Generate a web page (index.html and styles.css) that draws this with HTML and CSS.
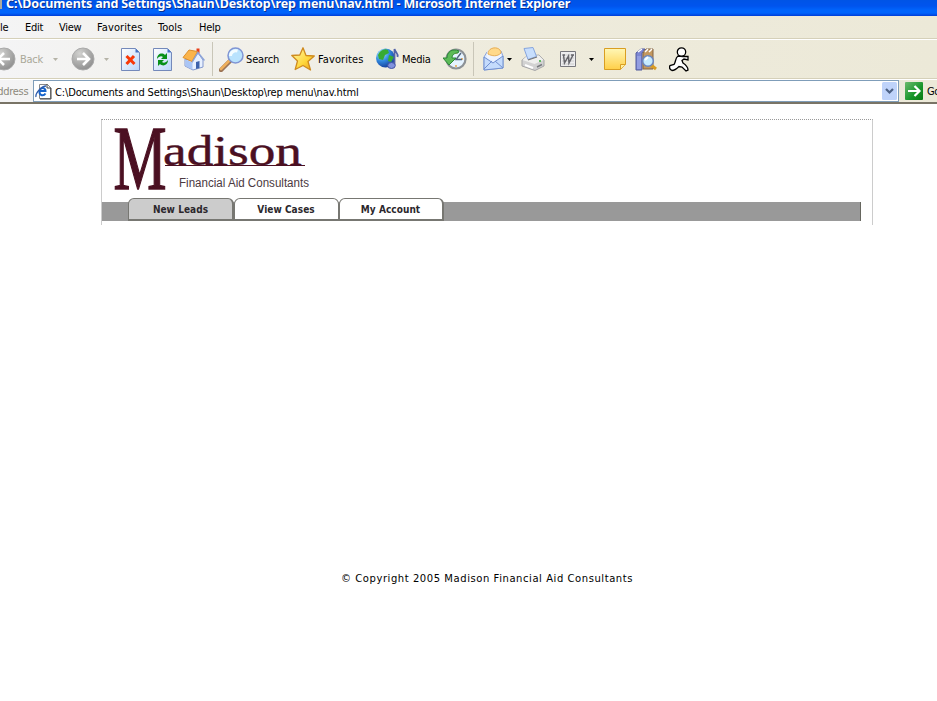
FILE: index.html
```html
<!DOCTYPE html>
<html lang="en">
<head>
<meta charset="utf-8">
<title>Madison Financial Aid Consultants</title>
<link rel="stylesheet" href="styles.css">
</head>
<body>
<header class="browser">
  <div class="titlebar"><i class="title-icon"></i><span class="title">C:\Documents and Settings\Shaun\Desktop\rep menu\nav.html - Microsoft Internet Explorer</span></div>
  <nav class="menubar">
    <span class="m-file">File</span><span class="m-edit">Edit</span><span class="m-view">View</span><span class="m-fav">Favorites</span><span class="m-tools">Tools</span><span class="m-help">Help</span>
  </nav>
  <div class="toolbar">
    <svg class="back" width="24" height="24" viewBox="0 0 24 24"><defs><radialGradient id="gray" cx=".35" cy=".25" r=".85"><stop offset="0" stop-color="#d2d2d0"/><stop offset="1" stop-color="#898989"/></radialGradient></defs><circle cx="12" cy="12" r="11" fill="url(#gray)" stroke="#aaa"/><path d="M18 12H7M12 6l-6 6 6 6" fill="none" stroke="#fff" stroke-width="2.6"/></svg>
    <span class="label t-back">Back</span>
    <svg class="caret c1" width="5" height="3" viewBox="0 0 5 3"><path d="M0 0h5L2.500 3z" fill="#b5b3a7"/></svg>
    <svg class="fwd" width="24" height="24" viewBox="0 0 24 24"><circle cx="12" cy="12" r="11" fill="url(#gray)" stroke="#aaa"/><path d="M6 12h11M12 6l6 6-6 6" fill="none" stroke="#fff" stroke-width="2.600"/></svg>
    <svg class="caret c2" width="5" height="3" viewBox="0 0 5 3"><path d="M0 0h5L2.500 3z" fill="#b5b3a7"/></svg>
    <svg class="stop" width="19" height="23" viewBox="0 0 19 23"><defs><linearGradient id="sheet" x2="1" y2="1"><stop stop-color="#fff"/><stop offset="1" stop-color="#b9d5fa"/></linearGradient></defs><path d="M.5.5h14l4 4v18H.5z" fill="url(#sheet)" stroke="#7489ba"/><path d="M14.500.5v4h4z" fill="#4672c4"/><path d="M5.500 8l8 8M13 8l-7.500 8" stroke="#f83808" stroke-width="3"/></svg>
    <svg class="refresh" width="19" height="23" viewBox="0 0 19 23"><path d="M.5.5h14l4 4v18H.5z" fill="url(#sheet)" stroke="#7489ba"/><path d="M14.500.5v4h4z" fill="#4672c4"/><path d="M4 11c0-5 5-7 8-4l2-2v6H8l2-2c-2-1.500-4-.5-6 2zM15 12c0 5-5 7-8 4l-2 2v-6h6l-2 2c2 1.500 4 .5 6-2z" fill="#079018"/></svg>
    <svg class="home" width="23" height="24" viewBox="0 0 23 24"><path d="M3 12l7 2 6-8 5 7v7l-10 3-8-4z" fill="#e7f0ff" stroke="#8298cf"/><path d="M3.500 12.500l7 3v7l-7-3.500z" fill="#a9c5f5"/><path d="M14 15l3.500-1v7l-3.500 1z" fill="#3d62ac"/><path d="M14.500 1.500h3v5h-3z" fill="#e83e18"/><path d="M7 3l8.500 1.500L10 14.500l-9-4z" fill="#fbb44b" stroke="#dc902f"/><path d="M10 15.500L16 5.500l6.500 8" fill="none" stroke="#8da4d8" stroke-width="1.400"/></svg>
    <i class="sep s1"></i>
    <svg class="search" width="25" height="25" viewBox="0 0 25 25"><path d="M2 23l9-9" stroke="#9b7457" stroke-width="4.500" stroke-linecap="round"/><path d="M2 22l8-8" stroke="#efb05b" stroke-width="2.500" stroke-linecap="round"/><circle cx="16.500" cy="8.500" r="7.500" fill="#b9e3fd" stroke="#8095d4" stroke-width="1.500"/><path d="M11.500 9c0-4 4-6 7-5" fill="none" stroke="#f3fcff" stroke-width="3"/></svg>
    <span class="label t-search">Search</span>
    <svg class="star" width="24" height="24" viewBox="0 0 24 24"><defs><linearGradient id="gold" x2="1" y2="1"><stop stop-color="#fffab0"/><stop offset=".6" stop-color="#ffd73b"/><stop offset="1" stop-color="#e89b18"/></linearGradient></defs><path d="M12 .8l3 7.700 8.300.5-6.300 5.500 2.500 8.500-7.500-4.500-7.800 4L6.500 14 .8 8.500l8-.5z" fill="url(#gold)" stroke="#cf8b20" stroke-width="1.300" stroke-linejoin="round"/></svg>
    <span class="label t-fav">Favorites</span>
    <svg class="media" width="24" height="22" viewBox="0 0 24 22"><defs><radialGradient id="globe" cx=".3" cy=".25" r=".8"><stop stop-color="#b4edff"/><stop offset=".5" stop-color="#328be0"/><stop offset="1" stop-color="#153d9a"/></radialGradient></defs><circle cx="9.500" cy="10" r="9.500" fill="url(#globe)"/><path d="M2 7C4 2 9 0 12 2l1 3-4 2-2 5-4-1zM13 7l5 2-3 5-3-1z" fill="#37ab32"/><path d="M18.500 17V1c1 4 4 4 3 8" fill="none" stroke="#5262a8" stroke-width="1.800"/><ellipse cx="15.500" cy="17.500" rx="3.800" ry="3" fill="#8092df" stroke="#4054a5"/></svg>
    <span class="label t-media">Media</span>
    <svg class="history" width="24" height="22" viewBox="0 0 24 22"><circle cx="13" cy="11" r="9.500" fill="#e5f3ff" stroke="#8d9296" stroke-width="2.200"/><path d="M13 4v2M20 11h-2M13 19v-2" stroke="#e7a348" stroke-width="1.500"/><path d="M18 5l-5 6.500h6" fill="none" stroke="#51657c" stroke-width="1.400"/><path d="M16 3C9 0 4 4 4 10H0l6 7 7-7H9c0-3 2-5 6-5z" fill="#5cbb58" stroke="#2b8837"/></svg>
    <i class="sep s2"></i>
    <svg class="mail" width="21" height="24" viewBox="0 0 21 24"><path d="M1 10L4 5l14-1 2 5v12L1 23z" fill="#e1ecff" stroke="#8ba4d9"/><path d="M4 5c3-5 11-5 14-1v6l-7 4-7-3z" fill="#eef4ff"/><path d="M5 7c0-8 13-8 13-1-4 4-9 3-13 1z" fill="#ffd98a" stroke="#e6ad55"/><path d="M1 10l9 6 10-7v12L1 23z" fill="#c4dbfc" stroke="#7190d0"/><path d="M1 22l8-8M20 21l-8-7" stroke="#7190d0"/></svg>
    <svg class="caret c3" width="5" height="3" viewBox="0 0 5 3"><path d="M0 0h5L2.500 3z"/></svg>
    <svg class="printer" width="24" height="24" viewBox="0 0 24 24"><path d="M1 13l5-4 12-1 5 5v6l-9 4.500L1 19z" fill="#d2d2d2" stroke="#a5a5a7"/><path d="M1.500 13L6 9l12-.5 4.500 4.500-9 4z" fill="#f0f0ee"/><path d="M3 1.500l9-1 3.500 9-8.500 3z" fill="#c7defd" stroke="#86a4dd"/><path d="M7 13l9-3" stroke="#777" stroke-width="1.200"/><path d="M4 18l8 3" stroke="#fff" stroke-width="2"/><path d="M16 20l5-2.500" stroke="#77797d" stroke-width="1.500"/><path d="M18 14h2" stroke="#37ae39" stroke-width="1.500"/></svg>
    <svg class="word" width="16" height="16" viewBox="0 0 16 16"><path d="M.5.5h15v15H.5z" fill="#ededef" stroke="#77777d"/><path d="M2 4h12M2 7h12M2 10h12M2 13h12" stroke="#ccc"/><path d="M2.500 4h2.500M3.500 4l1 8 4-7 .5 7 4-8M11 4h3" fill="none" stroke="#66666c" stroke-width="1.500"/></svg>
    <svg class="caret c4" width="5" height="3" viewBox="0 0 5 3"><path d="M0 0h5L2.500 3z"/></svg>
    <svg class="note" width="22" height="22" viewBox="0 0 22 22"><defs><linearGradient id="noteFill" x2="0" y2="1"><stop stop-color="#fff7b6"/><stop offset="1" stop-color="#ffcf48"/></linearGradient></defs><path d="M.5.5h21v16l-5 5H.5z" fill="url(#noteFill)" stroke="#d99e22"/><path d="M16.500 21v-4.500h5" fill="#fff0a0" stroke="#d99e22"/></svg>
    <svg class="books" width="22" height="23" viewBox="0 0 22 23"><path d="M1 5l5-4h4L7 5v17H1z" fill="#7d87d3" stroke="#535d9e"/><path d="M3 8v13M5 8v13" stroke="#a9b4ef"/><path d="M8 5l3-4h7v20H8z" fill="#c3985f" stroke="#826343"/><path d="M3 4l4-3M10 4l3-3M14 4l3-3" stroke="#fff" stroke-width="1.500"/><path d="M16 17l5 4" stroke="#d99c22" stroke-width="3"/><circle cx="13" cy="13" r="5.300" fill="#c5eaff" stroke="#6985bf" stroke-width="1.500"/><path d="M10 12l3-3" stroke="#fff" stroke-width="2"/></svg>
    <svg class="aim" width="20" height="25" viewBox="0 0 20 25"><path d="M9 9C6 11 7 15 5 17.500l-4 1c-1 2 0 4 2 5 3 0 5-2 7-4l3 .5 4 4 2-1c0-3-2-5-5-7l-1-2.500 2-1.500 4 1V9.500h-5z" fill="#fff" stroke="#000" stroke-width="1.300"/><circle cx="12.500" cy="5" r="4.200" fill="#fff" stroke="#000" stroke-width="1.300"/></svg>
  </div>
  <div class="addressbar">
    <span class="address-label">Address</span>
    <div class="address">
      <svg class="page-icon" width="17" height="17" viewBox="0 0 17 17"><path d="M4.500 1.500h8l3 3v11h-11z" fill="#fff" stroke="#888"/><path d="M12 1v4h4v11H5" fill="none" stroke="#444"/><path d="M10.500 10.500c-2 3-6 2-6-1.500 0-5 6-5 6-1H5" fill="none" stroke="#1764cb" stroke-width="2"/><path d="M1 14C0 10 7 3 11 3" fill="none" stroke="#315eab" stroke-width="1.300"/></svg>
      <span class="url">C:\Documents and Settings\Shaun\Desktop\rep menu\nav.html</span>
      <svg class="drop" width="15" height="18" viewBox="0 0 15 18"><rect width="15" height="18" rx="1.500" fill="#bfd3fa"/><path d="M4 7l3.500 3.500L11 7" fill="none" stroke="#4d6185" stroke-width="2.200"/></svg>
    </div>
    <svg class="go-icon" width="18" height="18" viewBox="0 0 18 18"><defs><linearGradient id="go" x2="1" y2="1"><stop stop-color="#6cba6d"/><stop offset=".6" stop-color="#179529"/><stop offset="1" stop-color="#087b11"/></linearGradient></defs><rect width="18" height="18" rx="1" fill="url(#go)"/><path d="M3 9h11M9.500 4l5 5-5 5" fill="none" stroke="#fff" stroke-width="2.200"/></svg>
    <span class="go">Go</span>
  </div>
</header>
<main class="page">
  <section class="banner">
    <svg class="logo" width="210" height="78" viewBox="0 0 210 78"><g fill="#4b1022"><text class="logo-serif logo-m" x="11.500" y="69" textLength="53" lengthAdjust="spacingAndGlyphs">M</text><text class="logo-serif logo-rest" x="61" y="45" textLength="139" lengthAdjust="spacingAndGlyphs">adison</text><path d="M63 45h140v1H63z"/></g><text class="logo-sub" x="77" y="66.500" textLength="130" lengthAdjust="spacingAndGlyphs">Financial Aid Consultants</text></svg>
    <nav class="tabs"><a class="tab active">New Leads</a><a class="tab">View Cases</a><a class="tab">My Account</a><i class="tab-rail"></i></nav>
  </section>
  <footer class="copyright">© Copyright 2005 Madison Financial Aid Consultants</footer>
</main>
</body>
</html>
```
FILE: styles.css
```css
* { box-sizing: border-box; }
body { margin: 0; width: 937px; height: 701px; overflow: hidden; background: #fff; color: #000; font: 11px/14px "DejaVu Sans Condensed", "DejaVu Sans", sans-serif; font-stretch: condensed; white-space: nowrap; }
svg { display: block; flex: none; }
.browser { width: 937px; height: 104px; overflow: hidden; background: linear-gradient(90deg, #f4f4f5, #eeebdc 55%, #ece9d8); border-bottom: 2px solid #797466; }
.titlebar { height: 16px; display: flex; align-items: flex-start; overflow: hidden; background: linear-gradient(#0054e6, #0054ee 6px, #0064fc 10px, #0064fc 13px, #003dd7 16px); }
.title-icon { width: 2px; height: 9px; margin-right: 4px; background: #aaa99f; }
.title { margin-top: -4px; color: #fff; font: bold 12.5px/16px "Noto Sans", sans-serif; letter-spacing: -.14px; text-shadow: 1px 1px #0a318f; }
.menubar { height: 24px; display: flex; align-items: center; border-bottom: 1px solid #fff; box-shadow: inset 0 -1px #d5d0b9; letter-spacing: -.3px; }
.m-file { width: 25px; margin-left: -7px; }
.m-edit { margin-left: 7px; width: 34px; }
.m-view { width: 38px; }
.m-fav { width: 61px; letter-spacing: .1px; }
.m-tools { width: 41px; letter-spacing: 0; }
.toolbar { height: 40px; display: flex; align-items: center; padding-bottom: 1px; border-bottom: 1px solid #fff; box-shadow: inset 0 -1px #d5d0b9; }
.label { flex: none; padding-top: 2px; letter-spacing: -.25px; }
.back { margin-left: -8px; }
.t-back { width: 29px; margin-left: 4px; color: #aaa899; }
.c1 { margin-left: 4px; }
.fwd { margin-left: 13px; }
.c2 { margin-left: 9px; }
.stop { margin-left: 12px; }
.refresh { margin-left: 13px; }
.home { margin-left: 10px; }
.sep { flex: none; width: 1px; height: 34px; background: #c9c6b8; }
.s1 { margin-left: 7px; }
.search { margin-left: 6px; }
.t-search { width: 45px; margin-left: 2px; letter-spacing: -.15px; }
.t-fav { width: 58px; margin-left: 3px; letter-spacing: .1px; }
.t-media { width: 41px; margin-left: 2px; }
.s2 { margin-left: 6px; }
.mail { margin-left: 9px; }
.c3 { margin-left: 3px; }
.printer { margin-left: 9px; }
.word { margin-left: 15px; }
.c4 { margin-left: 13px; }
.note { margin-left: 10px; }
.books { margin-left: 9px; }
.aim { margin-left: 12px; }
.addressbar { height: 22px; display: flex; align-items: center; }
.address-label { flex: none; width: 42px; margin-left: -9px; padding-top: 1px; color: #8d897c; letter-spacing: -.3px; }
.address { flex: none; width: 866px; height: 22px; display: flex; align-items: center; border: 1px solid #7f9db9; background: #fff; }
.page-icon { margin-left: 1px; }
.url { flex: 1; margin-left: 3px; padding-top: 3px; letter-spacing: -.14px; }
.drop { margin-right: 1px; }
.go-icon { margin-left: 6px; }
.go { margin-left: 4px; padding-top: 2px; letter-spacing: -.3px; }
.page { padding-top: 15px; }
.banner { width: 772px; height: 106px; margin-left: 101px; border: 1px solid #ccc; border-top: 1px dotted #999; border-bottom: 0; }
.logo-serif { font-family: "Liberation Serif", serif; stroke: #4b1022; stroke-width: .4px; }
.logo-m { font-size: 92px; stroke-width: 1.6px; }
.logo-rest { font-size: 43px; }
.logo-sub { font: 12px "Liberation Sans", sans-serif; fill: #4b3941; }
.tabs { width: 759px; height: 23px; display: flex; padding-left: 26px; background: linear-gradient(#fff 4px, #999 4px); }
.tab { flex: none; width: 105px; height: 23px; padding-right: 1px; text-align: center; font: bold 10px/22px "DejaVu Sans Condensed", sans-serif; letter-spacing: .05px; color: #2b272c; border: 1px solid #777772; border-bottom-width: 2px; border-radius: 6px 6px 0 0; background: #fff; }
.tab:nth-child(3) { border-right-width: 2px; }
.tab.active { width: 106px; padding-right: 0; border-right-width: 2px; background: #ccc; }
.tab-rail { flex: 1; height: 19px; margin-top: 4px; border-right: 1px solid #66665f; }
.copyright { margin: 347px 0 0 341px; font: 10px/14px "DejaVu Sans", sans-serif; letter-spacing: .56px; }
```
